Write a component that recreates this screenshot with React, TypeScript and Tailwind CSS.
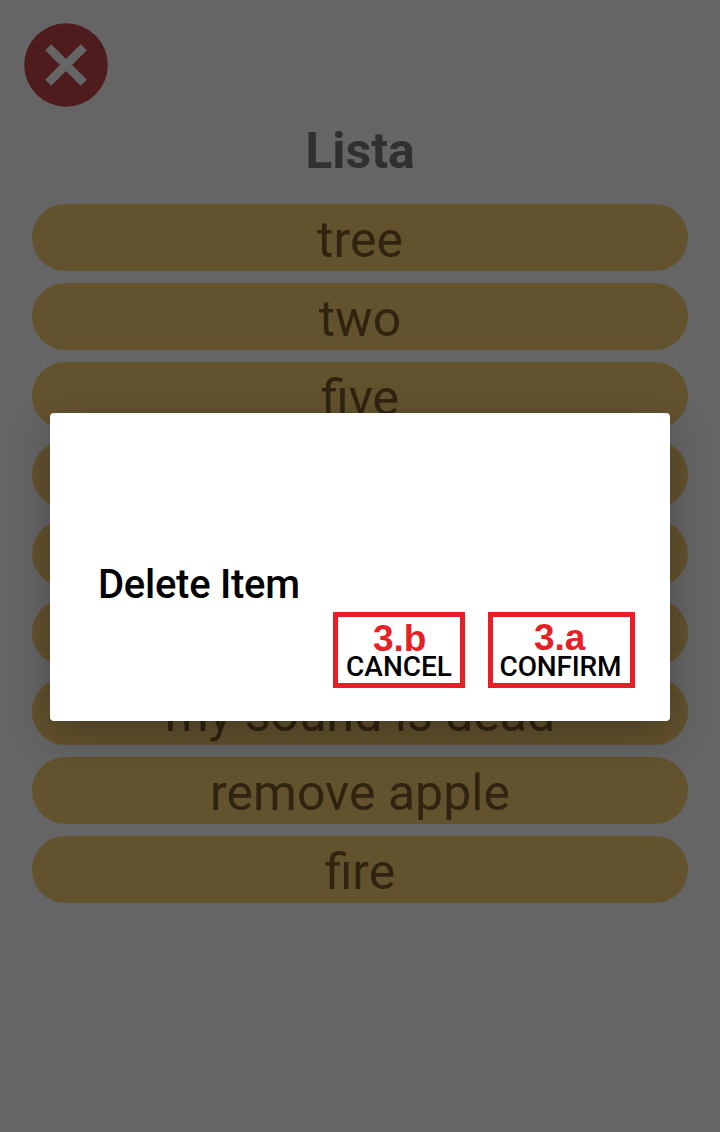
const items = ['tree', 'two', 'five', '', '', '', 'my sound is dead', 'remove apple', 'fire'];

function CloseButton() {
  return (
    <button className="ml-6 block h-[84px] w-[84px]" aria-label="Close">
      <svg viewBox="0 0 84 84" className="h-full w-full">
        <circle cx="42" cy="42" r="41.8" fill="#4e1c1c" />
        <path d="M24.2 24.2L59.8 59.8M59.8 24.2L24.2 59.8" stroke="#656565" strokeWidth="8.6" />
      </svg>
    </button>
  );
}

function DialogAction({ tag, label, className, tagClass }: { tag: string; label: string; className: string; tagClass: string }) {
  return (
    <button className={`relative h-[76px] border-[5px] border-[#e81f27] text-[28px] leading-[32px] font-medium whitespace-nowrap text-black ${className}`}>
      <span className="block pt-[34px] text-center">{label}</span>
      <span className={`absolute font-['Liberation_Sans',sans-serif] text-[37px] leading-[40px] font-bold text-[#e81f27] ${tagClass}`}>{tag}</span>
    </button>
  );
}

export default function App() {
  return (
    <div className="relative h-[1132px] w-[720px] overflow-hidden bg-[#656565] pt-[23px] font-[Roboto,sans-serif]">
      <CloseButton />
      <h1 className="mt-[14px] h-[60px] text-center text-[50px] leading-[60px] font-bold text-[#303030]">Lista</h1>
      <ul className="mx-8 mt-[23px] flex flex-col gap-3">
        {items.map((item, i) => (
          <li key={i} className="h-[67px] rounded-full bg-[#63522e] pt-[5px] text-center text-[50px] leading-[63px] text-[#302410]">
            {item}
          </li>
        ))}
      </ul>
      <div
        role="dialog"
        className="absolute top-[413px] left-[50px] flex h-[308px] w-[620px] flex-col rounded-[4px] bg-white pt-[148px] shadow-[0_13px_40px_rgba(0,0,0,0.27)]"
      >
        <h2 className="h-[51px] pl-12 text-[40px] leading-[48px] font-medium tracking-[-0.27px] text-black">Delete Item</h2>
        <div className="flex justify-end gap-[23px] pr-[35px]">
          <DialogAction tag="3.b" label="CANCEL" className="w-[132px]" tagClass="top-[2px] left-[35px]" />
          <DialogAction tag="3.a" label="CONFIRM" className="w-[147px] pr-[2px] tracking-[-0.15px]" tagClass="top-px left-[41px] tracking-normal" />
        </div>
      </div>
    </div>
  );
}
